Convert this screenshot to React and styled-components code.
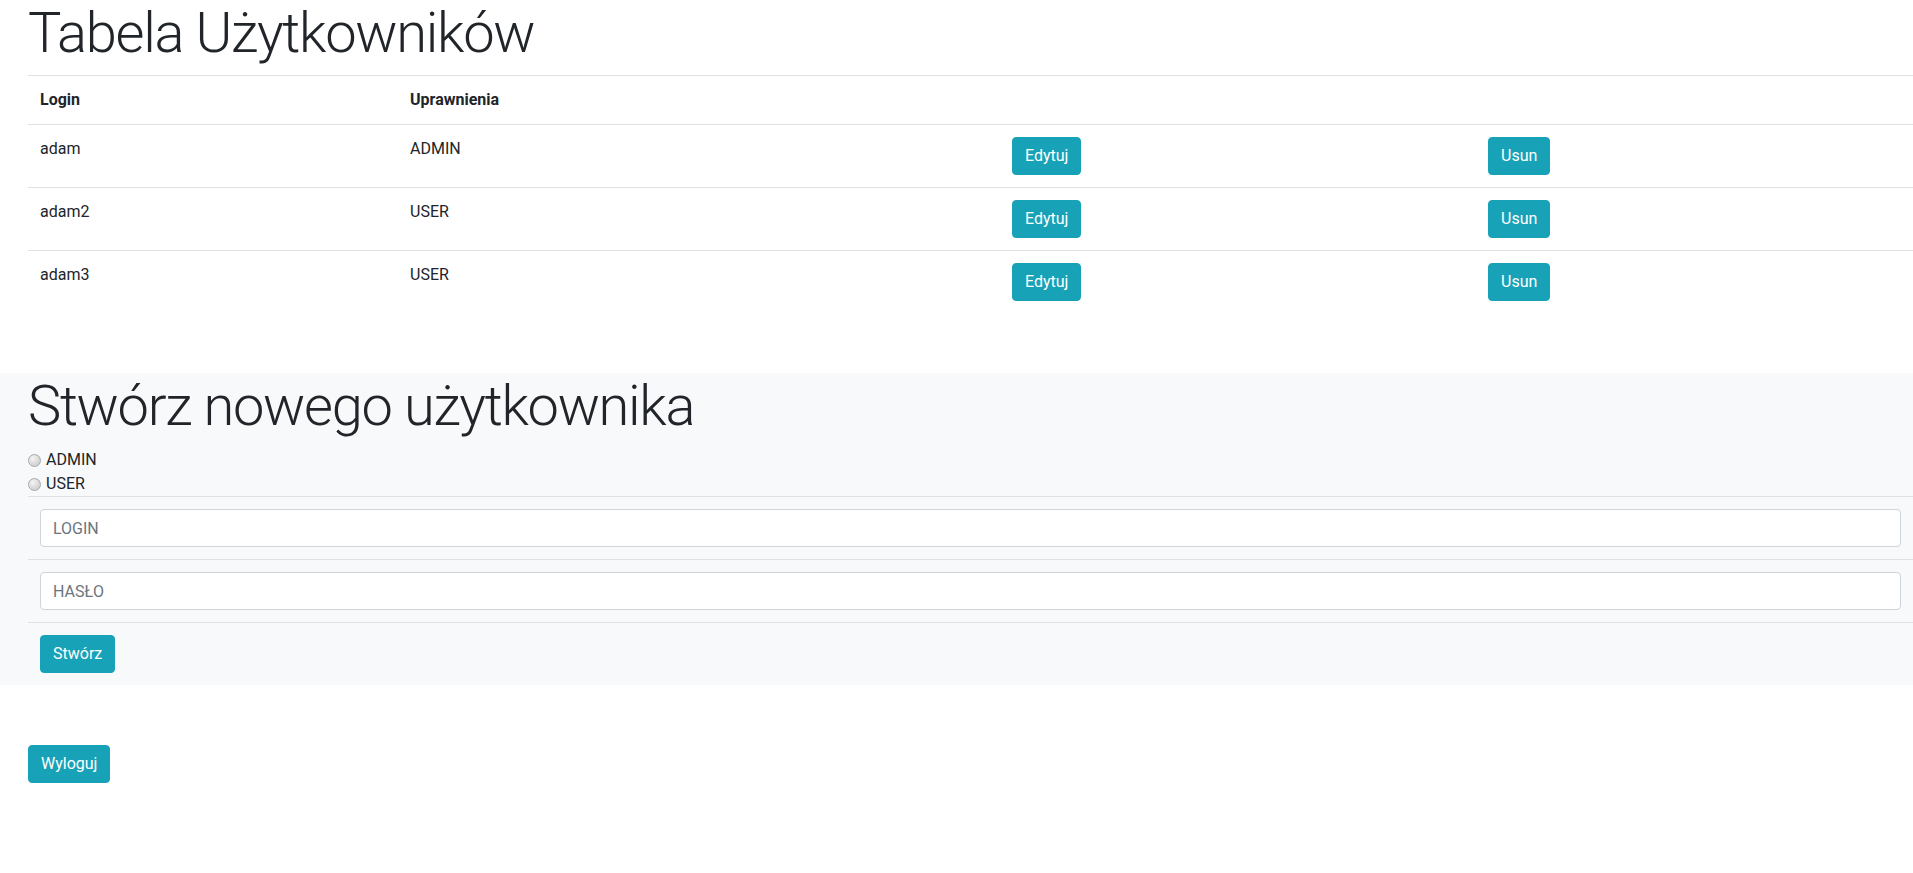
import React from 'react';
import styled, { createGlobalStyle } from 'styled-components';

const GlobalStyle = createGlobalStyle`
  body {
    margin: 0;
    font-family: "Segoe UI", Roboto, "Helvetica Neue", Arial, sans-serif;
    font-size: 16px;
    line-height: 1.5;
    color: #212529;
    background: #fff;
  }
  * { box-sizing: border-box; }
`;

const Section = styled.div`
  padding-left: 28px;
`;

const FormSection = styled.div`
  margin-top: 60px;
  padding-left: 28px;
  background: #f8f9fa;
`;

const Title = styled.h1`
  margin: 0 0 8px;
  font-size: 56px;
  font-weight: 300;
  line-height: 1.2;
  letter-spacing: -1.3px;
`;

const Table = styled.table`
  width: 100%;
  border-collapse: collapse;
  table-layout: fixed;
  margin: 0;
`;

const Th = styled.th`
  width: ${p => p.width || 'auto'};
  padding: 12px;
  text-align: left;
  vertical-align: top;
  font-weight: 700;
  border-top: 1px solid #dee2e6;
`;

const Td = styled.td`
  padding: 12px;
  vertical-align: top;
  border-top: 1px solid #dee2e6;
`;

const Button = styled.button`
  display: inline-block;
  padding: 6px 12px;
  font-family: inherit;
  font-size: 16px;
  line-height: 1.5;
  font-weight: 400;
  color: #fff;
  background: #17a2b8;
  border: 1px solid #17a2b8;
  border-radius: 4px;
  cursor: pointer;
`;

const RoleList = styled.div`
  display: flex;
  flex-direction: column;
`;

const RoleLabel = styled.label`
  display: flex;
  align-items: center;
  gap: 5px;
  height: 24px;
`;

const Radio = styled.input`
  appearance: none;
  width: 13px;
  height: 13px;
  margin: 0;
  border-radius: 50%;
  border: 1px solid #a8a8a8;
  background: radial-gradient(circle at 35% 30%, #f4f4f4 0%, #dadada 55%, #c8c8c8 100%);
`;

const Input = styled.input`
  display: block;
  width: 100%;
  height: 38px;
  padding: 6px 12px;
  font-family: inherit;
  font-size: 16px;
  line-height: 1.5;
  color: #495057;
  background: #fff;
  border: 1px solid #ced4da;
  border-radius: 4px;
  &::placeholder { color: #6c757d; }
`;

const LogoutRow = styled.div`
  margin-top: 60px;
  padding-left: 28px;
`;

const users = [
  { login: 'adam', role: 'ADMIN' },
  { login: 'adam2', role: 'USER' },
  { login: 'adam3', role: 'USER' },
];

export default function App() {
  return (
    <>
      <GlobalStyle />
      <Section>
        <Title>Tabela Użytkowników</Title>
        <Table>
          <thead>
            <tr>
              <Th width="370px">Login</Th>
              <Th width="602px">Uprawnienia</Th>
              <Th width="476px" />
              <Th />
            </tr>
          </thead>
          <tbody>
            {users.map(user => (
              <tr key={user.login}>
                <Td>{user.login}</Td>
                <Td>{user.role}</Td>
                <Td><Button>Edytuj</Button></Td>
                <Td><Button>Usun</Button></Td>
              </tr>
            ))}
          </tbody>
        </Table>
      </Section>
      <FormSection>
        <Title>Stwórz nowego użytkownika</Title>
        <RoleList>
          <RoleLabel><Radio type="radio" name="role" value="ADMIN" />ADMIN</RoleLabel>
          <RoleLabel><Radio type="radio" name="role" value="USER" />USER</RoleLabel>
        </RoleList>
        <Table>
          <tbody>
            <tr><Td><Input type="text" placeholder="LOGIN" /></Td></tr>
            <tr><Td><Input type="password" placeholder="HASŁO" /></Td></tr>
            <tr><Td><Button>Stwórz</Button></Td></tr>
          </tbody>
        </Table>
      </FormSection>
      <LogoutRow>
        <Button>Wyloguj</Button>
      </LogoutRow>
    </>
  );
}
